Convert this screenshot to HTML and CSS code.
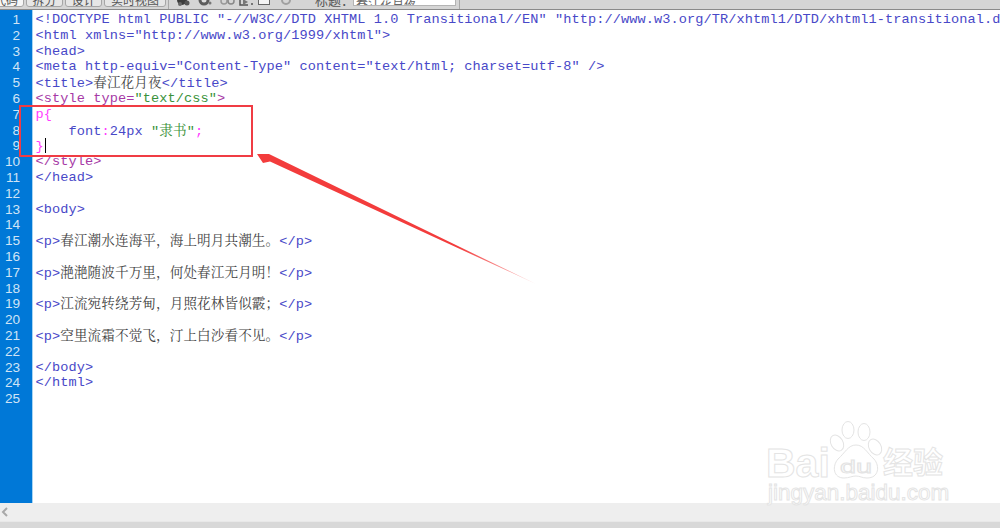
FILE: index.html
```html
<!DOCTYPE html>
<html lang="zh">
<head>
<meta charset="utf-8">
<title>春江花月夜</title>
<link rel="stylesheet" href="styles.css">
</head>
<body>
<div class="page">
  <header class="toolbar">
    <div class="tabs">
      <span class="tab first">代码</span>
      <span class="tab split">拆分</span>
      <span class="tab design">设计</span>
      <span class="tab live">实时视图</span>
    </div>
    <svg class="tool-icons" width="122" height="9" viewBox="0 0 122 9">
      <circle cx="10" cy="0" r="5" fill="#3c3c3c"/><circle cx="15" cy="3" r="2.500" fill="#555"/><circle cx="8" cy="4" r="2" fill="#666"/>
      <circle cx="32" cy="0" r="5.500" fill="#5c5c5c"/><circle cx="32" cy="0" r="2.500" fill="#ddd"/><circle cx="38" cy="3" r="1.500" fill="#777"/>
      <circle cx="52" cy="1" r="3" fill="none" stroke="#999" stroke-width="1.500"/><circle cx="59" cy="1" r="3" fill="none" stroke="#888" stroke-width="1.500"/>
      <path d="M68 -3v8h8" fill="none" stroke="#555" stroke-width="1.500"/><path d="M71 -1l5 3-5 3z" fill="#777"/><circle cx="80" cy="4" r="1" fill="#555"/>
      <rect x="86.500" y="-3.500" width="11" height="8" fill="#f4f4f4" stroke="#666"/>
      <circle cx="114" cy="0" r="4" fill="none" stroke="#a0a0a0" stroke-width="2"/>
    </svg>
    <div class="title-field">
      <span class="title-label">标题&#xFF1A;</span>
      <span class="title-input">春江花月夜</span>
    </div>
    <span class="tool-sep"></span>
  </header>
  <main class="editor">
    <div class="gutter">
      <div>1</div><div>2</div><div>3</div><div>4</div><div>5</div>
      <div>6</div><div>7</div><div>8</div><div>9</div><div>10</div>
      <div>11</div><div>12</div><div>13</div><div>14</div><div>15</div>
      <div>16</div><div>17</div><div>18</div><div>19</div><div>20</div>
      <div>21</div><div>22</div><div>23</div><div>24</div><div>25</div>
    </div>
    <div class="code">
      <div class="line"><span class="tag">&lt;!DOCTYPE html PUBLIC "-//W3C//DTD XHTML 1.0 Transitional//EN" "http://www.w3.org/TR/xhtml1/DTD/xhtml1-transitional.dtd"&gt;</span></div>
      <div class="line"><span class="tag">&lt;html xmlns="http://www.w3.org/1999/xhtml"&gt;</span></div>
      <div class="line"><span class="tag">&lt;head&gt;</span></div>
      <div class="line"><span class="tag">&lt;meta http-equiv="Content-Type" content="text/html; charset=utf-8" /&gt;</span></div>
      <div class="line"><span class="tag">&lt;title&gt;</span><span class="cjk">春江花月夜</span><span class="tag">&lt;/title&gt;</span></div>
      <div class="line"><span class="style">&lt;style type=</span><span class="green">"text/css"</span><span class="style">&gt;</span></div>
      <div class="line"><span class="css">p{</span></div>
      <div class="line">    <span class="prop">font</span><span class="css">:</span><span class="prop">24px </span><span class="green">"<span class="cjk">隶书</span>"</span><span class="css">;</span></div>
      <div class="line"><span class="css">}</span><span class="caret"></span></div>
      <div class="line"><span class="style">&lt;/style&gt;</span></div>
      <div class="line"><span class="tag">&lt;/head&gt;</span></div>
      <div class="line"></div>
      <div class="line"><span class="tag">&lt;body&gt;</span></div>
      <div class="line"></div>
      <div class="line"><span class="tag">&lt;p&gt;</span><span class="cjk">春江潮水连海平&#xFF0C;海上明月共潮生。</span><span class="tag">&lt;/p&gt;</span></div>
      <div class="line"></div>
      <div class="line"><span class="tag">&lt;p&gt;</span><span class="cjk">滟滟随波千万里&#xFF0C;何处春江无月明&#xFF01;</span><span class="tag">&lt;/p&gt;</span></div>
      <div class="line"></div>
      <div class="line"><span class="tag">&lt;p&gt;</span><span class="cjk">江流宛转绕芳甸&#xFF0C;月照花林皆似霰&#xFF1B;</span><span class="tag">&lt;/p&gt;</span></div>
      <div class="line"></div>
      <div class="line"><span class="tag">&lt;p&gt;</span><span class="cjk">空里流霜不觉飞&#xFF0C;汀上白沙看不见。</span><span class="tag">&lt;/p&gt;</span></div>
      <div class="line"></div>
      <div class="line"><span class="tag">&lt;/body&gt;</span></div>
      <div class="line"><span class="tag">&lt;/html&gt;</span></div>
    </div>
  </main>
  <div class="hscroll"><svg width="8" height="10" viewBox="0 0 8 10"><path d="M6 1 2 5l4 4" fill="none" stroke="#a8a8a8" stroke-width="2"/></svg></div>
  <footer class="statusbar"></footer>

  <div class="callout"></div>
  <svg class="arrow" width="290" height="140" viewBox="0 0 290 140">
    <defs>
      <linearGradient id="fade" x1="0" y1="0" x2="1" y2="0">
        <stop offset="0" stop-color="#f33c3c"/>
        <stop offset=".72" stop-color="#f33c3c"/>
        <stop offset="1" stop-color="#f33c3c" stop-opacity=".25"/>
      </linearGradient>
    </defs>
    <path d="M0 1 12 1 279 131 13 8.500 6 10Z" fill="url(#fade)"/>
  </svg>
  <svg class="watermark" width="195" height="95" viewBox="0 0 195 95">
    <g class="wm-shapes">
      <ellipse cx="77" cy="28" rx="6" ry="8.500" transform="rotate(-30 77 28)"/>
      <ellipse cx="88" cy="15" rx="6" ry="8.500"/>
      <ellipse cx="104" cy="17" rx="6" ry="8.500"/>
      <ellipse cx="115" cy="32" rx="6" ry="8.500" transform="rotate(-30 115 32)"/>
      <path d="M96 30c8 0 11 8 18 14 6 7 5 19-7 19-5 0-7-2-11-2s-7 2-12 2c-11 0-12-12-6-19 7-6 10-14 18-14Z"/>
      <text class="wm-logo" x="6" y="62">Bai</text>
      <text class="wm-du" x="80" y="58" textLength="32" lengthAdjust="spacingAndGlyphs">du</text>
      <text class="wm-cn" x="123" y="58">经验</text>
      <text class="wm-url" x="8" y="85">jingyan.baidu.com</text>
    </g>
  </svg>
</div>
</body>
</html>
```
FILE: styles.css
```css
* { box-sizing: border-box; }
html, body { margin: 0; padding: 0; }
body { background: #fff; overflow: hidden; }
.page {
  position: relative;
  width: 1000px;
  height: 528px;
  display: flex;
  flex-direction: column;
  overflow: hidden;
}
.toolbar {
  flex: 0 0 10px;
  height: 10px;
  display: flex;
  align-items: flex-start;
  background: #d5d5d5;
  border-bottom: 1px solid #8a8a8a;
  font: 12px/16px "Noto Sans CJK SC", sans-serif;
  color: #555;
  overflow: hidden;
}
.tabs {
  flex: 0 0 169px;
  height: 9px;
  display: flex;
  gap: 2px;
  border-right: 1px solid #a8a8a8;
}
.tab {
  flex: none;
  height: 16px;
  margin-top: -9px;
  background: #e6e6e6;
  border: 1px solid #a6a6a6;
  border-radius: 0 0 3px 3px;
  text-align: center;
}
.first { width: 36px; margin-left: -12px; background: #f6f6f6; }
.split { width: 37px; }
.design { width: 37px; }
.live { width: 62px; }
.tool-icons { flex: none; margin-left: 3px; display: block; }
.title-field { flex: none; display: flex; margin-left: 21px; }
.title-label { width: 38px; margin-top: -8px; font-size: 13px; white-space: nowrap; }
.title-input {
  width: 103px;
  height: 6px;
  line-height: 6px;
  background: #fff;
  border: 1px solid #b4b4b4;
  border-top: 0;
  padding-left: 2px;
  overflow: hidden;
  color: #666;
}
.tool-sep { flex: none; width: 1px; height: 9px; margin-left: 3px; background: #a8a8a8; }
.editor { flex: 1; min-height: 0; display: flex; }
.gutter {
  flex: 0 0 33px;
  width: 33px;
  background: #0078d7;
  border-right: 1px solid #a8d4f2;
  padding-top: 2px;
  color: #cfe4f6;
  font: 13.600px/15.800px "Liberation Sans", Arial, sans-serif;
  text-align: right;
}
.gutter div { height: 15.800px; padding-right: 12px; }
.code {
  flex: 1;
  min-width: 0;
  padding: 2px 0 0 2.500px;
  font: 13.600px/15.800px "Liberation Mono", "Courier New", "Noto Sans CJK SC", monospace;
  overflow: hidden;
}
.line { height: 15.800px; white-space: pre; letter-spacing: .09px; }
.tag, .prop { color: #4848c8; }
.style { color: #a63aa6; }
.green { color: #3a923a; }
.css { color: #ff3cff; }
.cjk { font-family: "Noto Serif CJK SC", "Noto Sans CJK SC", sans-serif; color: #444; font-size: 13.600px; line-height: 1; }
.green .cjk { color: #3a923a; }
.caret {
  display: inline-block;
  width: 1px;
  height: 15px;
  background: #000;
  vertical-align: -3px;
  margin-left: 1px;
}
.hscroll {
  flex: 0 0 18px;
  display: flex;
  align-items: center;
  padding-left: 1px;
  background: #eeeeee;
}
.statusbar {
  flex: 0 0 7px;
  background: #d8d8d8;
  border-top: 1px solid #e8e8e8;
}
.callout {
  position: absolute;
  left: 19px;
  top: 105px;
  width: 234px;
  height: 52px;
  border: 2px solid #f03c44;
}
.arrow {
  position: absolute;
  left: 257px;
  top: 153px;
}
.watermark {
  position: absolute;
  left: 760px;
  top: 415px;
}
.wm-shapes { fill: rgba(255, 255, 255, .85); stroke: #e4e4e4; stroke-width: 1; }
.wm-logo { font: 700 41px "Liberation Sans", sans-serif; }
.wm-du { font: 400 19px "Liberation Sans", sans-serif; }
.wm-cn { font: 700 30px "Noto Sans CJK SC", sans-serif; }
.wm-url { font: 400 22.500px "Liberation Sans", sans-serif; }
```
